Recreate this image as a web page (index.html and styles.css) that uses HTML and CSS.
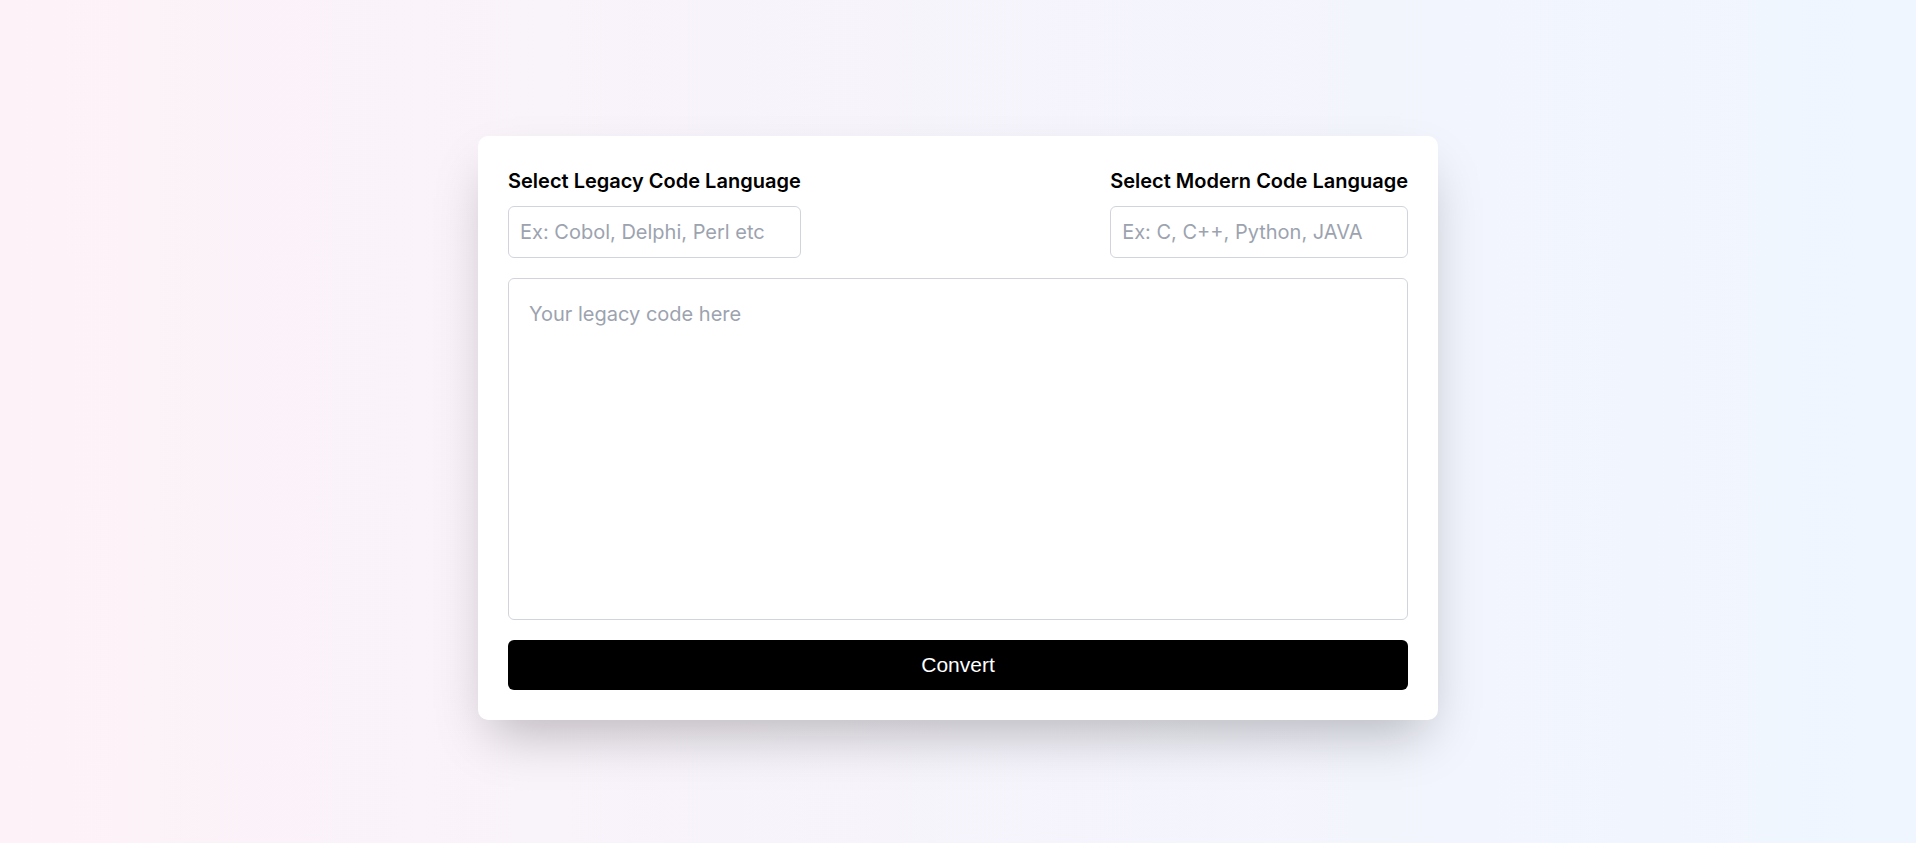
FILE: index.html
```html
<!DOCTYPE html>
<html lang="en">
<head>
<meta charset="utf-8">
<title>Legacy Code Converter</title>
<link rel="stylesheet" href="styles.css">
</head>
<body>
  <main class="page">
    <form class="card">
      <div class="lang-row">
        <div class="lang-col">
          <label class="lang-label" for="legacy">Select Legacy Code Language</label>
          <input id="legacy" class="lang-input" type="text" placeholder="Ex: Cobol, Delphi, Perl etc">
        </div>
        <div class="lang-col">
          <label class="lang-label" for="modern">Select Modern Code Language</label>
          <input id="modern" class="lang-input" type="text" placeholder="Ex: C, C++, Python, JAVA">
        </div>
      </div>
      <textarea class="code-area" placeholder="Your legacy code here"></textarea>
      <button class="convert-btn" type="button">Convert</button>
    </form>
  </main>
</body>
</html>
```

FILE: styles.css
```css
* {
  box-sizing: border-box;
}

html, body {
  margin: 0;
  height: 100%;
}

body {
  background: linear-gradient(to right, #fdf2f8, #eff6ff);
  font-family: Inter, "Liberation Sans", Arial, sans-serif;
}

.page {
  min-height: 100vh;
  padding-top: 12px;
  display: flex;
  align-items: center;
  justify-content: center;
}

.card {
  width: 960px;
  background: #ffffff;
  border-radius: 10px;
  padding: 30px;
  box-shadow: 0 25px 50px -12px rgba(0, 0, 0, 0.25);
  display: flex;
  flex-direction: column;
  gap: 20px;
}

.lang-row {
  display: flex;
  justify-content: space-between;
  align-items: flex-start;
}

.lang-col {
  display: flex;
  flex-direction: column;
  gap: 10px;
}

.lang-label {
  font-size: 20px;
  line-height: 30px;
  font-weight: 600;
  color: #000000;
}

.lang-input {
  width: 0;
  min-width: 100%;
  height: 52px;
  padding: 0 11px;
  border: 1px solid #d1d5db;
  border-radius: 6px;
  font-family: inherit;
  font-size: 20px;
  color: #111827;
  background: #ffffff;
  outline: none;
}

.lang-input::placeholder,
.code-area::placeholder {
  color: #9ca3af;
}

.code-area {
  display: block;
  width: 100%;
  height: 342px;
  padding: 21px 20px 20px;
  border: 1px solid #d1d5db;
  border-radius: 6px;
  font-family: inherit;
  font-size: 20px;
  line-height: 28px;
  resize: none;
  outline: none;
}

.convert-btn {
  height: 50px;
  width: 100%;
  border: none;
  border-radius: 6px;
  background: #000000;
  color: #ffffff;
  font-family: "Liberation Sans", Arial, sans-serif;
  font-size: 21px;
  cursor: pointer;
}
```
